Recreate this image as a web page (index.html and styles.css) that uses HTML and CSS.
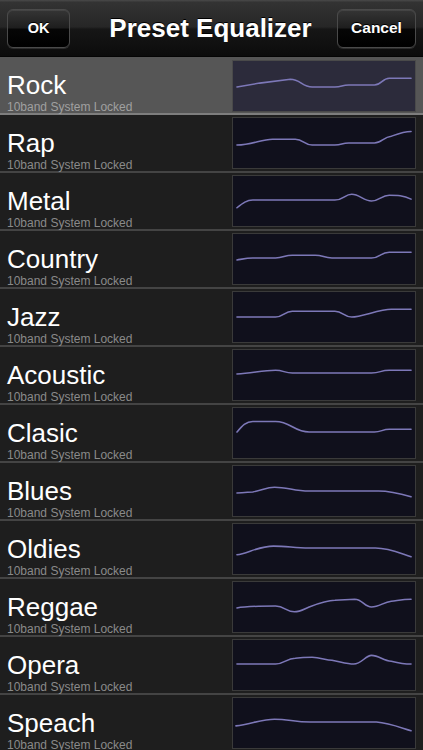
FILE: index.html
```html
<!DOCTYPE html>
<html>
<head>
<meta charset="utf-8">
<link rel="stylesheet" href="styles.css">
</head>
<body>
<div class="app">
  <header class="navbar">
    <div class="btn btn-ok">OK</div>
    <div class="title">Preset Equalizer</div>
    <div class="btn btn-cancel">Cancel</div>
  </header>
  <div class="list">
    <div class="row selected">
      <div class="label"><div class="name">Rock</div><div class="sub">10band System Locked</div></div>
      <div class="graph"><svg viewBox="0 0 184 52" preserveAspectRatio="none"><path d="M4 27 L27 23 L58 19 C68 19 70 27 80 27 L103 27 C110 27 110 25 117 25 L143 25 C150 25 151 18 158 18 L180 18"/></svg></div>
    </div>
    <div class="row">
      <div class="label"><div class="name">Rap</div><div class="sub">10band System Locked</div></div>
      <div class="graph"><svg viewBox="0 0 184 52" preserveAspectRatio="none"><path d="M4 28 C20 28 28 22 40 22 L63 22 C71 22 72 28 80 28 L103 28 C110 28 110 26 117 26 L143 26 C150 26 152 20 160 19 C168 16 173 14 180 14"/></svg></div>
    </div>
    <div class="row">
      <div class="label"><div class="name">Metal</div><div class="sub">10band System Locked</div></div>
      <div class="graph"><svg viewBox="0 0 184 52" preserveAspectRatio="none"><path d="M4 33 C10 28 14 25 20 25 L103 25 C112 25 113 19 120 19 C128 19 132 26 140 26 C148 26 150 20 158 20 C166 20 172 20 180 24"/></svg></div>
    </div>
    <div class="row">
      <div class="label"><div class="name">Country</div><div class="sub">10band System Locked</div></div>
      <div class="graph"><svg viewBox="0 0 184 52" preserveAspectRatio="none"><path d="M4 27 C10 26 14 25 20 25 L43 25 C51 25 52 22 60 22 L83 22 C91 22 92 25 100 25 L140 25 C149 25 149 19 158 19 L180 19"/></svg></div>
    </div>
    <div class="row">
      <div class="label"><div class="name">Jazz</div><div class="sub">10band System Locked</div></div>
      <div class="graph"><svg viewBox="0 0 184 52" preserveAspectRatio="none"><path d="M4 26 L43 26 C51 26 52 20 60 20 L103 20 C111 20 112 26 120 26 C130 26 148 18 160 18 L180 18"/></svg></div>
    </div>
    <div class="row">
      <div class="label"><div class="name">Acoustic</div><div class="sub">10band System Locked</div></div>
      <div class="graph"><svg viewBox="0 0 184 52" preserveAspectRatio="none"><path d="M4 25 C20 24 30 21 43 21 C51 21 52 24 60 24 L140 24 C149 24 149 21 158 21 L180 21"/></svg></div>
    </div>
    <div class="row">
      <div class="label"><div class="name">Clasic</div><div class="sub">10band System Locked</div></div>
      <div class="graph"><svg viewBox="0 0 184 52" preserveAspectRatio="none"><path d="M4 25 C9 19 13 14 20 14 L43 14 C58 14 62 25 77 25 L143 25 C150 25 151 22 158 22 L180 22"/></svg></div>
    </div>
    <div class="row">
      <div class="label"><div class="name">Blues</div><div class="sub">10band System Locked</div></div>
      <div class="graph"><svg viewBox="0 0 184 52" preserveAspectRatio="none"><path d="M4 28 C12 28 16 27 20 27 C30 25 34 22 42 22 C55 22 62 26 77 26 L147 26 C160 26 170 29 180 32"/></svg></div>
    </div>
    <div class="row">
      <div class="label"><div class="name">Oldies</div><div class="sub">10band System Locked</div></div>
      <div class="graph"><svg viewBox="0 0 184 52" preserveAspectRatio="none"><path d="M4 32 C14 31 26 23 41 23 C55 23 62 25 77 25 L144 25 C158 25 168 30 180 34"/></svg></div>
    </div>
    <div class="row">
      <div class="label"><div class="name">Reggae</div><div class="sub">10band System Locked</div></div>
      <div class="graph"><svg viewBox="0 0 184 52" preserveAspectRatio="none"><path d="M4 27 C14 25 30 25 43 25 C52 25 54 31 62 31 C68 31 72 28 77 26 C87 22 95 19 103 19 L123 18 C131 18 133 26 140 26 C148 26 152 21 160 20 C168 19 172 18 180 18"/></svg></div>
    </div>
    <div class="row">
      <div class="label"><div class="name">Opera</div><div class="sub">10band System Locked</div></div>
      <div class="graph"><svg viewBox="0 0 184 52" preserveAspectRatio="none"><path d="M4 25 L43 25 C52 25 54 19 63 19 C70 18 74 18 80 18 C88 18 94 21 100 21 C110 23 116 25 122 25 C130 25 134 16 140 16 C148 16 152 22 160 22 C168 24 172 25 180 25"/></svg></div>
    </div>
    <div class="row">
      <div class="label"><div class="name">Speach</div><div class="sub">10band System Locked</div></div>
      <div class="graph"><svg viewBox="0 0 184 52" preserveAspectRatio="none"><path d="M3 29 C18 27 30 22 42 22 C56 22 62 25 78 25 L145 25 C158 26 170 31 180 34"/></svg></div>
    </div>
  </div>
</div>
</body>
</html>
```
FILE: styles.css
```css
html, body {
  margin: 0;
  padding: 0;
  background: #1e1e1e;
}
body {
  font-family: "Liberation Sans", Arial, sans-serif;
  width: 423px;
  height: 750px;
  overflow: hidden;
}
.app {
  width: 423px;
}
.navbar {
  height: 57px;
  box-sizing: border-box;
  display: grid;
  grid-template-columns: 1fr auto 1fr;
  align-items: center;
  padding: 0 7px;
  background: linear-gradient(#4a4a4a 0, #333 4%, #262626 48%, #161616 52%, #0c0c0c 100%);
  border-bottom: 1px solid #050505;
}
.btn {
  height: 39px;
  box-sizing: border-box;
  display: flex;
  align-items: center;
  justify-content: center;
  color: #fff;
  font-weight: bold;
  font-size: 15px;
  border: 1px solid #4a4a4a;
  border-radius: 6px;
  background: linear-gradient(#353535 0, #1e1e1e 48%, #060606 52%, #000 100%);
  box-shadow: 0 1px 0 rgba(255,255,255,0.12), inset 0 1px 0 rgba(255,255,255,0.08);
  text-shadow: 0 -1px 0 #000;
}
.btn-ok {
  width: 63px;
  justify-self: start;
  font-size: 14.5px;
}
.btn-cancel {
  width: 79px;
  justify-self: end;
  font-size: 15.5px;
}
.title {
  color: #fff;
  font-weight: bold;
  font-size: 26px;
  text-shadow: 0 -1px 0 #000;
  white-space: nowrap;
  margin-left: -2px;
}
.row {
  height: 58px;
  box-sizing: border-box;
  display: flex;
  justify-content: space-between;
  align-items: flex-start;
  padding: 2px 7px 0 7px;
  background: #1e1e1e;
  border-bottom: 2px solid #444;
}
.row.selected {
  background: #565656;
  border-bottom-color: #7e7e7e;
  padding-top: 3px;
}
.label {
  padding-top: 13px;
}
.row.selected .label {
  padding-top: 12px;
}
.name {
  color: #fff;
  font-size: 26px;
  line-height: 26px;
  white-space: nowrap;
}
.sub {
  margin-top: 3px;
  color: #8a8a8a;
  font-size: 12px;
  line-height: 13px;
  white-space: nowrap;
}
.row.selected .sub {
  color: #a0a0a0;
}
.graph {
  width: 184px;
  height: 52px;
  box-sizing: border-box;
  border: 1px solid #3a3a3a;
  background: #10101c;
}
.row.selected .graph {
  background: #2c2b3b;
  border-color: #4a4a4a;
}
.graph svg {
  display: block;
  width: 100%;
  height: 100%;
}
.graph path {
  fill: none;
  stroke: #7d78b8;
  stroke-width: 1.6;
  stroke-linecap: round;
  stroke-linejoin: round;
}
```
